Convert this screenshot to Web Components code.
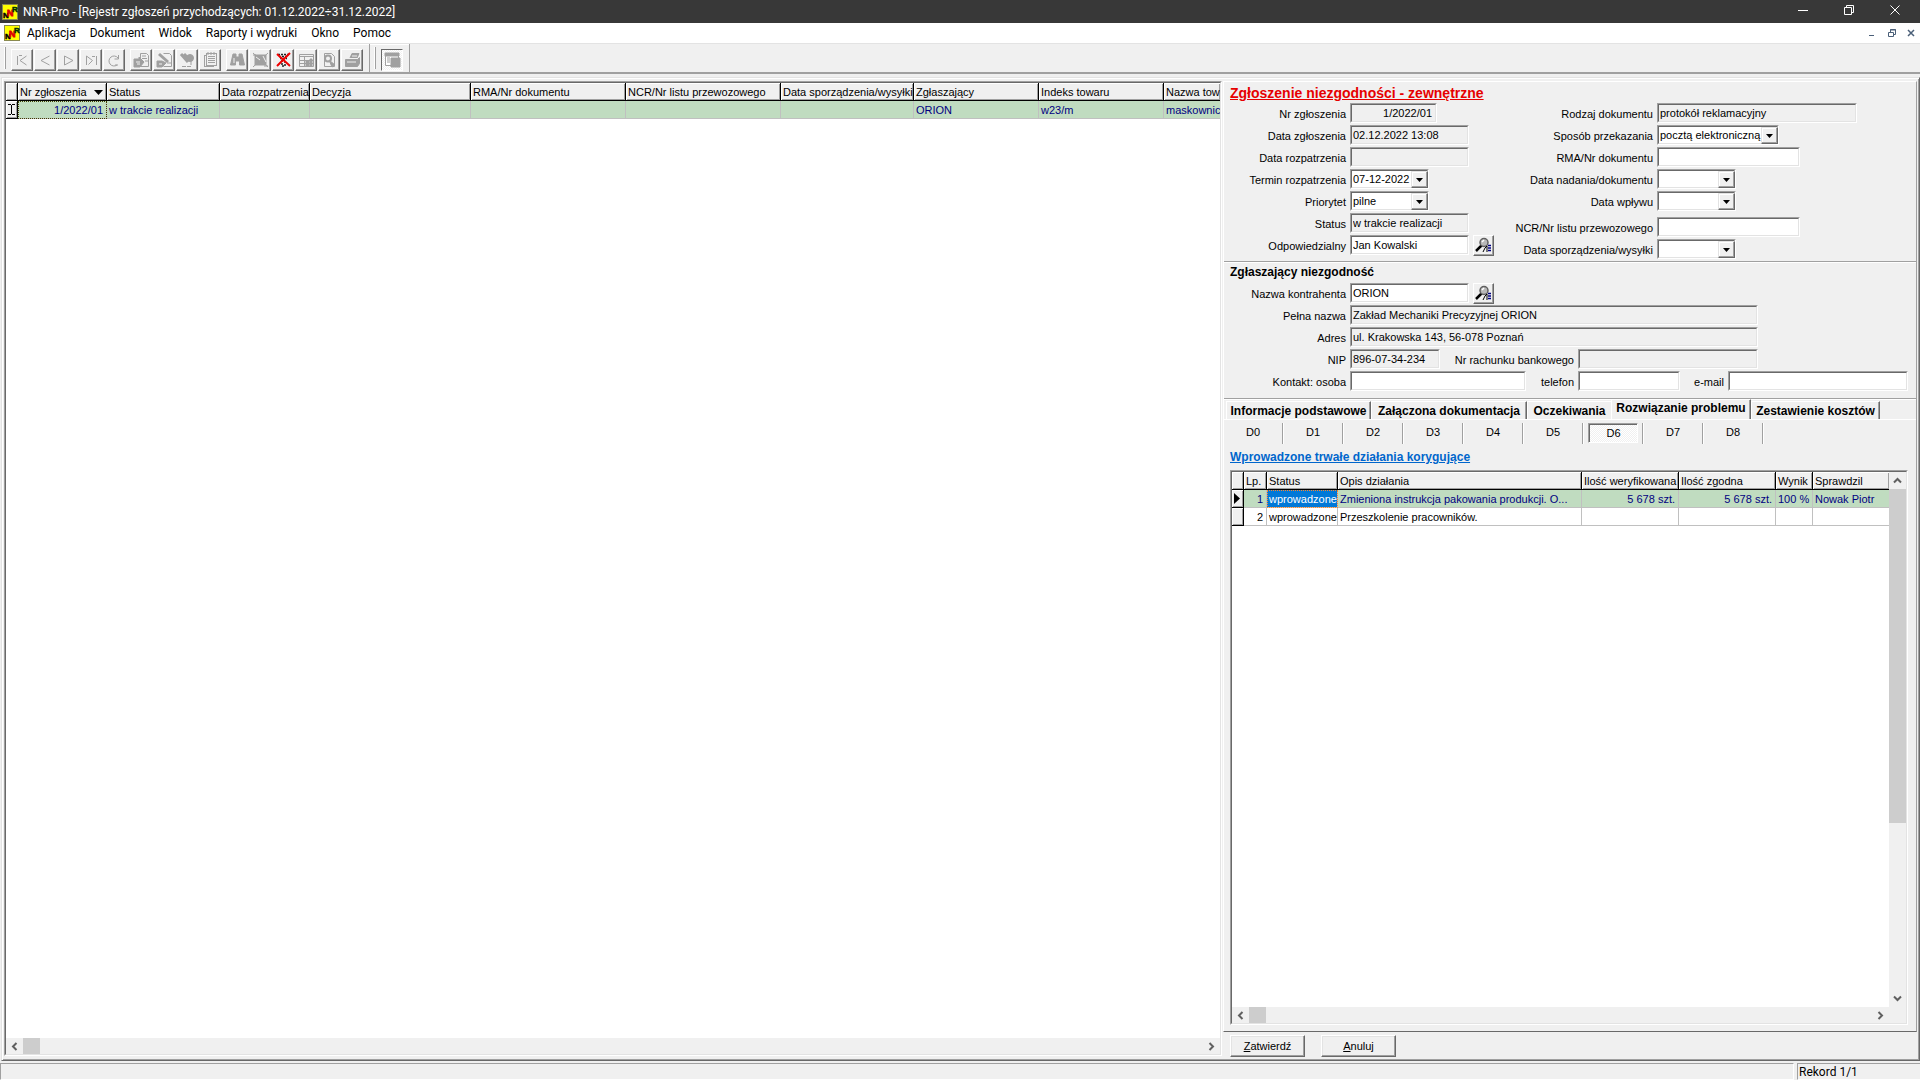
<!DOCTYPE html>
<html lang="pl">
<head>
<meta charset="utf-8">
<title>NNR-Pro</title>
<style>
html,body{margin:0;height:100%}
body{font:11px/13px "Liberation Sans",sans-serif;color:#000;background:#f0f0f0;overflow:hidden}
</style>
</head>
<body>
<nnr-app></nnr-app>
<script>
const BASE = `
*{box-sizing:border-box}
:host{display:block;box-sizing:border-box;min-width:0}
button,input,select{font:inherit;color:inherit;margin:0;border-radius:0;outline:0}
svg{display:block}
`;
function define(name, css, html, setup) {
  const tpl = document.createElement('template');
  customElements.define(name, class extends HTMLElement {
    connectedCallback() {
      if (this.shadowRoot) return;
      tpl.innerHTML = `<style>${BASE}${css}</style>${typeof html === 'function' ? html(this) : html}`;
      this.attachShadow({mode: 'open'}).append(tpl.content.cloneNode(true));
      if (setup) setup(this, this.shadowRoot);
    }
  });
}
const at = (el, n, d = '') => el.getAttribute(n) ?? d;

/* application logo */
define('app-logo', `:host{width:16px;height:16px;flex:none}`,
`<svg width="16" height="16" viewBox="0 0 16 16" aria-hidden="true"><rect width="16" height="16" fill="#8a8a50"/><rect x="1" y="1" width="14" height="14" fill="#ff0"/><g font-family="Liberation Sans" font-weight="bold"><text x="1" y="14" font-size="8" fill="#000" stroke="#000" stroke-width=".5">N</text><text x="5" y="12" font-size="9" fill="#e00000" stroke="#e00000" stroke-width=".8">N</text><text x="10" y="8" font-size="8" fill="#003000" stroke="#003000" stroke-width=".5">R</text></g></svg>`);

/* title bar */
define('title-bar', `
:host{display:flex;align-items:center;height:23px;background:#383838;color:#fff;font:12px/16px Roboto,sans-serif;padding:0 2px}
span{margin-left:5px;flex:1}
button{width:46px;height:23px;border:0;background:none;color:#fff;padding:0 0 3px;display:grid;place-items:center}`,
`<app-logo></app-logo><span><slot></slot></span>
<button aria-label="Minimalizuj"><svg width="10" height="10" stroke="#fff" fill="none"><path d="M0 5.5h10"/></svg></button>
<button aria-label="Przywróć"><svg width="10" height="10" stroke="#fff" fill="none"><path d="M.5 2.5h7v7h-7zM2.5 2V.5h7v7H8"/></svg></button>
<button aria-label="Zamknij"><svg width="10" height="10" stroke="#fff" fill="none"><path d="M.5.5l9 9M9.5.5l-9 9"/></svg></button>`);

/* menu bar */
define('menu-bar', `
:host{display:flex;align-items:center;height:20px;background:#fff;font:12px/16px Roboto,sans-serif;padding-left:4px}
nav{display:flex;flex:1}
button{border:0;background:none;padding:0 7px}
.win button{width:19px;height:19px;padding:0;display:grid;place-items:center}
.win{display:flex}`,
el => `<app-logo></app-logo><nav>${at(el,'items').split('|').map(t=>`<button>${t}</button>`).join('')}</nav>
<div class="win">
<button aria-label="Minimalizuj okno"><svg width="8" height="8" stroke="#4a5f78" fill="none"><path d="M0 6.5h5"/></svg></button>
<button aria-label="Przywróć okno"><svg width="8" height="8" stroke="#4a5f78" fill="none"><path d="M.5 3.5h5v4h-5zM2.5 3V.5h5v5H6M2 1h6"/></svg></button>
<button aria-label="Zamknij okno"><svg width="8" height="8" stroke="#4a5f78" stroke-width="1.5" fill="none"><path d="M1 1l6 6M7 1L1 7"/></svg></button></div>`);

/* toolbar */
const G = '#a0a0a0';
const ICONS = {
  first: `<path d="M3.500 4v9M5 3.500h3M12.500 4L6 8.500l6.500 4.500" fill="none"/>`,
  prev: `<path d="M12.500 4L4 8.500l8.500 4.500" fill="none"/>`,
  next: `<path d="M4.500 13V4l8.500 4.500L4.500 13" fill="none"/>`,
  last: `<path d="M3.500 13V4l6 4.500-4 4M9 4.500h3M13.500 4v9" fill="none"/>`,
  refresh: `<path d="M11 13a5 5 0 1 1 1-7M12.500 3v4h-4M9 13h3" fill="none"/>`,
  insert: `<path d="M7.500 6V1.500h6l2 2v11h-8M9 4h4M9 6.500h5M12 9h3" fill="none"/><path d="M1 7h5v-2l5 5-4 5H1z" fill="${G}"/><path d="M3 10h4M4 12h3" stroke="#f0f0f0"/>`,
  edit: `<path d="M7.500 1.500h6l2 2v11h-8M11 11h4" fill="none"/><path d="M1 9h5l4 2-4 4H1z" fill="${G}"/><path d="M3 2l9 8" stroke-width="3"/><path d="M3 12h3" stroke="#f0f0f0"/>`,
  del: `<path d="M2 2l7 8M5 2l6 6" stroke-width="3"/><circle cx="11" cy="6" r="3.500" fill="${G}"/><path d="M12 9v4M3 14.500h10" stroke-dasharray="4 1"/>`,
  copy: `<rect x="2.500" y="3.500" width="9" height="11" fill="none"/><rect x="4.500" y="1.500" width="10" height="12" fill="#f0f0f0"/><path d="M6 4.500h7M6 6.500h7M6 8.500h7M6 10.500h7M6 0v3M9 0v3M12 0v3"/>`,
  find: `<path d="M4 2h3v3h3V2h3l2.500 11h-5V9h-4v4h-5z" fill="${G}"/><path d="M5 6v5" stroke="#f0f0f0"/>`,
  filter: `<rect x="3" y="3" width="11" height="10" fill="${G}"/><path d="M1 1l15 14M16 1L1 15M1 3h3M12 14h4"/><path d="M4 5l4 3M11 4l3 6" stroke="#f0f0f0"/>`,
  clear: `<path d="M3 2.500h11M4 4.500h9M5 6.500h7M7 8v6h3V8" stroke="#202020" stroke-width="1.500" fill="none" stroke-dasharray="2 1"/><path d="M2 2l13 12M15 1L2 14" stroke="#f00000" stroke-width="2"/>`,
  table: `<path d="M1.500 2.500h14v12h-14zM2 4.500h13M2 8.500h13M2 11.500h13M6.500 5v9" fill="none"/><path d="M8 9h3v5H8zM12 7h2v7h-2z" fill="${G}"/>`,
  preview: `<path d="M3.500 1.500h7l3 3v10h-10z" fill="none"/><circle cx="7" cy="6.500" r="3" fill="none" stroke-width="2"/><path d="M8 8l6 5-3 2z" fill="${G}"/>`,
  print: `<path d="M6 6l2-4.500h7L13 6M1.500 7.500h12l2-2v6l-2 3h-12z" fill="${G}"/><path d="M3 10h9M8 4h5" stroke="#f0f0f0"/>`,
  layout: `<path d="M1.500 1.500h13v12h-13z" fill="#fff"/><path d="M1 1h14v3H1zM3 6h3M3 8h3M3 10h3M7 6h9v9H7z" fill="${G}"/>`
};
define('tool-button', `
button{width:22px;height:22px;padding:0 0 0 2px;background:#f0f0f0;border:1px solid;border-color:#fff #696969 #696969 #fff;box-shadow:inset -1px -1px #a0a0a0}
:host([pressed]) button{border-color:#696969 #fff #fff #696969;box-shadow:none;background:repeating-conic-gradient(#fff 0 25%,#f0f0f0 0 50%) 0 0/2px 2px}`,
el => `<button aria-label="${at(el,'label')}"><svg width="17" height="16" viewBox="0 0 17 16" stroke="${G}">${ICONS[at(el,'icon')]}</svg></button>`);
define('tool-bar', `
:host{display:flex;height:31px;border-top:1px solid #e3e3e3;border-bottom:2px solid #a0a0a0;background:#f0f0f0}
.band{display:flex;align-items:flex-start;padding:5px 6px 0 11px;border-right:1px solid #a0a0a0;box-shadow:inset 0 1px #fff;position:relative;gap:5px}
.band::before{content:"";position:absolute;left:4px;top:3px;width:2px;height:22px;background:linear-gradient(90deg,#fff 1px,#a0a0a0 1px)}
.grp{display:flex;gap:1px}`,
() => {
  const b = s => s.split(' ').map(i=>`<tool-button icon="${i}" label="${i}"></tool-button>`).join('');
  return `<div class="band"><div class="grp">${b('first prev next last refresh')}</div><div class="grp">${b('insert edit del copy')}</div><div class="grp">${b('find filter clear table preview print')}</div></div>
  <div class="band"><tool-button pressed icon="layout" label="Układ"></tool-button></div>`;
});

/* scroll bar */
define('scroll-bar', `
:host{display:flex;background:#f0f0f0;height:16px;flex:none}
:host([vertical]){flex-direction:column;width:17px;height:auto}
:host([corner]){padding-right:17px}
button{width:17px;height:16px;border:0;background:none;padding:0;display:grid;place-items:center;flex:none}
:host([vertical]) button{height:17px}
.track{flex:1;min-height:0}
.thumb{background:#cdcdcd;width:var(--len,17px);height:100%}
:host([vertical]) .thumb{width:100%;height:var(--len)}`,
el => {
  const v = el.hasAttribute('vertical');
  const ch = d => `<svg width="9" height="9" fill="none" stroke="#606060" stroke-width="2"><path d="${d}"/></svg>`;
  return `<button aria-label="Wstecz">${ch(v?'M1 6.500L4.500 3 8 6.500':'M6.500 1L3 4.500 6.500 8')}</button><div class="track"><div class="thumb"></div></div><button aria-label="Dalej">${ch(v?'M1 2.500L4.500 6 8 2.500':'M2.500 1L6 4.500 2.500 8')}</button>`;
});

/* data grid */
const GRIDS = {
  reg: {
    cols: [['',12],['Nr zgłoszenia',89],['Status',113],['Data rozpatrzenia',90],['Decyzja',161],['RMA/Nr dokumentu',155],['NCR/Nr listu przewozowego',155],['Data sporządzenia/wysyłki',133],['Zgłaszający',125],['Indeks towaru',125],['Nazwa tow',57]],
    sort: 1, right: [1], focus: 1,
    rows: [['I','1/2022/01','w trakcie realizacji','','','','','','ORION','w23/m','maskownic']]
  },
  act: {
    cols: [['',12],['Lp.',23],['Status',71],['Opis działania',244],['Ilość weryfikowana',97],['Ilość zgodna',97],['Wynik',37],['Sprawdzil',77]],
    right: [1,4,5,6], focus: 2, blue: true, corner: true,
    rows: [['&gt;','1','wprowadzone','Zmieniona instrukcja pakowania produkcji. O...','5 678 szt.','5 678 szt.','100 %','Nowak Piotr'],['','2','wprowadzone','Przeszkolenie pracowników.','','','','']]
  }
};
const MARKS = {
  'I': `<svg width="7" height="11" fill="none" stroke="#000"><path d="M0 .5h3M4 .5h3M0 10.500h3M4 10.500h3M3.500 1v9"/></svg>`,
  '&gt;': `<svg width="7" height="11"><path d="M0 0l6 5.500L0 11z"/></svg>`
};
define('data-grid', `
:host{display:flex;min-height:0;border:1px solid;border-color:#a0a0a0 #fff #fff #a0a0a0}
.in{flex:1;min-width:0;display:flex;flex-direction:column;border:1px solid;border-color:#696969 #e3e3e3 #e3e3e3 #696969;background:#fff}
.mid{display:flex;flex:1;min-height:0}
.view{flex:1;min-width:0;overflow:hidden}
table{border-collapse:separate;border-spacing:0;table-layout:fixed;width:0}
th,td{height:18px;padding:1px 0 0 2px;font-weight:normal;text-align:left;white-space:nowrap;overflow:hidden}
th,td.mark{background:#f0f0f0;border-right:1px solid #000;border-bottom:1px solid #000;box-shadow:inset 1px 1px #fff,inset -1px -1px #a0a0a0}
td.mark{padding:0 0 0 2px;vertical-align:middle}
td{border-right:1px solid #c0c0c0;border-bottom:1px solid #c0c0c0}
td.mark{border-bottom-color:#000}
tr.cur td:not(.mark){background:#c0dcc0;color:#000080}
td.r{text-align:right;padding-right:3px}
tr.cur td.focus{outline:1px dotted #404000;outline-offset:-1px}
tr.cur td.focus.blue{background:#0078d7;color:#fff;outline-color:#ff8728}
.sorted{display:flex;justify-content:space-between;align-items:center;padding-right:3px}`,
el => {
  const g = GRIDS[at(el,'data')];
  return `<div class="in"><div class="mid"><div class="view"><table>
<colgroup>${g.cols.map(c=>`<col style="width:${c[1]}px">`).join('')}</colgroup>
<thead><tr>${g.cols.map((c,i)=>`<th>${i===g.sort?`<div class="sorted">${c[0]}<svg width="9" height="5"><path d="M0 0h9L4.500 5z"/></svg></div>`:c[0]}</th>`).join('')}</tr></thead>
<tbody>${g.rows.map((r,n)=>`<tr class="${n?'':'cur'}">${r.map((c,i)=>i===0?`<td class="mark">${MARKS[c]||''}</td>`:`<td class="${g.right.includes(i)?'r':''} ${g.focus===i?'focus':''} ${g.focus===i&&g.blue?'blue':''}">${c}</td>`).join('')}</tr>`).join('')}</tbody>
</table></div><slot name="side"></slot></div><scroll-bar ${g.corner?'corner':''}></scroll-bar></div>`;
});

/* labelled form field: text box, drop-down, optional lookup button */
define('form-field', `
:host{display:flex;align-items:center;height:20px;gap:4px;--lw:122px}
:host([col2]){--lw:153px}
label{width:var(--lw);text-align:right;white-space:nowrap;flex:none;padding-top:2px}
.box{width:var(--w,119px);height:20px;flex:none;display:flex;border:1px solid;border-color:#a0a0a0 #fff #fff #a0a0a0}
input,select{flex:1;min-width:0;width:100%;height:18px;border:1px solid;border-color:#696969 #e3e3e3 #e3e3e3 #696969;background:#fff;padding:0 1px 1px 1px;appearance:none}
select{padding:0 16px 0 1px}
input[readonly]{background:#f0f0f0}
:host([end]) input{text-align:right;padding-right:3px}
.combo{position:relative}
.arrow{position:absolute;right:0;top:1px;width:17px;height:17px;pointer-events:none;background:#f0f0f0;border:1px solid;border-color:#e3e3e3 #696969 #696969 #e3e3e3;box-shadow:inset -1px -1px #a0a0a0,inset 1px 1px #fff;display:grid;place-items:center}
.look{width:21px;height:21px;padding:0;background:#f0f0f0;border:1px solid;border-color:#fff #696969 #696969 #fff;box-shadow:inset -1px -1px #a0a0a0;display:grid;place-items:center}`,
el => {
  const v = at(el,'value'), l = at(el,'label');
  const ctl = el.hasAttribute('combo')
    ? `<div class="box combo"><select id="c"><option>${v}</option></select><span class="arrow"><svg width="7" height="4"><path d="M0 0h7L3.500 4z"/></svg></span></div>`
    : `<div class="box"><input id="c" value="${v}" ${el.hasAttribute('ro')?'readonly':''}></div>`;
  return `<label for="c">${l}</label>${ctl}${el.hasAttribute('lookup')?`<button class="look" aria-label="Wybierz"><svg width="17" height="16" viewBox="0 0 17 16"><path d="M1 14l6-6" stroke="#000" stroke-width="2.500"/><circle cx="9" cy="5.500" r="4" fill="#b8b8b8" stroke="#606060" stroke-width="1.500"/><path d="M7 5l2-2" stroke="#fff" stroke-width="1.500"/><path d="M8 15l2-4 2-2v6" stroke="#000" fill="none"/><path d="M13 8.500h3M13 11h3M13 13.500h3" stroke="#000080" stroke-width="1.500"/></svg></button>`:''}`;
}, (el) => el.style.setProperty('--w', at(el,'w','119') + 'px'));

/* raised push button */
define('push-button', `
button{width:75px;height:22px;padding:0;background:#f0f0f0;border:1px solid;border-color:#fff #696969 #696969 #fff;box-shadow:inset -1px -1px #a0a0a0,inset 1px 1px #e3e3e3}`,
`<button><slot></slot></button>`);

/* page tabs */
define('page-tabs', `
:host{display:flex;align-items:flex-end;height:20px;padding-left:2px}
button{height:18px;width:var(--w);padding:2px 0 0;text-align:center;font-size:12px;font-weight:bold;background:#f0f0f0;border:0;border-left:1px solid #fff;border-top:1px solid #fff;border-right:1px solid #696969;box-shadow:inset -1px 0 #a0a0a0;white-space:nowrap}
button.on{height:20px;padding:0 0 2px}
button.pre{border-right:0;box-shadow:none}`,
`<button style="--w:145px">Informacje podstawowe</button><button style="--w:156px">Załączona dokumentacja</button><button class="pre" style="--w:84px">Oczekiwania</button><button class="on" style="--w:140px">Rozwiązanie problemu</button><button style="--w:129px">Zestawienie kosztów</button>`);

/* flat D0-D8 strip */
define('step-strip', `
:host{display:flex;height:21px}
div{width:60px;height:21px;border-right:1px solid #a0a0a0;box-shadow:1px 0 #fff;padding:0 4px 0 5px}
button{width:50px;height:20px;border:1px solid transparent;background:none;padding:0 0 1px}
button.on{border-color:#a0a0a0 #fff #fff #a0a0a0;box-shadow:inset 1px 1px #696969;padding:1px 0 0 1px;background:repeating-conic-gradient(#fff 0 25%,#f0f0f0 0 50%) 0 0/2px 2px}`,
() => [0,1,2,3,4,5,6,7,8].map(i=>`<div><button class="${i===6?'on':''}">D${i}</button></div>`).join(''));

/* status bar */
define('status-bar', `
:host{display:flex;gap:3px;height:19px;padding-top:2px;font:12px/16px Roboto,sans-serif}
div{border:1px solid;border-color:#a0a0a0 #fff #fff #a0a0a0;padding-left:1px;height:17px}
.a{flex:1}.b{width:123px;border-right:0}`,
`<div class="a"></div><div class="b"><slot></slot></div>`);

/* complaint editor */
define('claim-panel', `
:host{display:flex;flex-direction:column;min-height:0}
h1,h2,h3{margin:0;font-weight:bold}
.card{flex:1;min-height:0;display:flex;flex-direction:column;border:1px solid;border-color:#fff #a0a0a0 #696969 #fff}
h1{font-size:14px;line-height:16px;padding:3px 0 2px 6px;color:#e60000;text-decoration:underline}
.two{display:flex;height:158px}
.col{display:flex;flex-direction:column;gap:2px}
.c1{width:276px}
.gap{margin-top:4px}
section{border-bottom:1px solid #a0a0a0;box-shadow:0 1px #fff}
h2{font-size:12px;line-height:16px;padding:2px 0 3px 6px}
.who{height:137px}
.line{display:flex}
.body{flex:1;min-height:0;display:flex;flex-direction:column;border-top:1px solid #fff;padding:3px 8px 6px 6px}
step-strip{margin-left:-7px}
h3{font-size:12px;line-height:14px;padding:6px 0;color:#0066cc}
h3 a{color:inherit}
data-grid{flex:1}
.acts{display:flex;gap:16px;padding:3px 0 2px 7px}
`,
`<div class="card">
<section><h1>Zgłoszenie niezgodności - zewnętrzne</h1>
<div class="two"><div class="col c1">
<form-field label="Nr zgłoszenia" value="1/2022/01" w="87" ro end></form-field>
<form-field label="Data zgłoszenia" value="02.12.2022 13:08" ro></form-field>
<form-field label="Data rozpatrzenia" ro></form-field>
<form-field label="Termin rozpatrzenia" value="07-12-2022" w="79" combo></form-field>
<form-field label="Priorytet" value="pilne" w="79" combo></form-field>
<form-field label="Status" value="w trakcie realizacji" ro></form-field>
<form-field label="Odpowiedzialny" value="Jan Kowalski" lookup></form-field>
</div><div class="col">
<form-field col2 label="Rodzaj dokumentu" value="protokół reklamacyjny" w="200" ro></form-field>
<form-field col2 label="Sposób przekazania" value="pocztą elektroniczną" w="122" combo></form-field>
<form-field col2 label="RMA/Nr dokumentu" w="143"></form-field>
<form-field col2 label="Data nadania/dokumentu" w="79" combo></form-field>
<form-field col2 label="Data wpływu" w="79" combo></form-field>
<form-field class="gap" col2 label="NCR/Nr listu przewozowego" w="143"></form-field>
<form-field col2 label="Data sporządzenia/wysyłki" w="79" combo></form-field>
</div></div></section>
<section class="who"><h2>Zgłaszający niezgodność</h2><div class="col">
<form-field label="Nazwa kontrahenta" value="ORION" lookup></form-field>
<form-field label="Pełna nazwa" value="Zakład Mechaniki Precyzyjnej ORION" w="408" ro></form-field>
<form-field label="Adres" value="ul. Krakowska 143, 56-078 Poznań" w="408" ro></form-field>
<div class="line"><form-field label="NIP" value="896-07-34-234" w="90" ro></form-field><form-field style="--lw:134px" label="Nr rachunku bankowego" w="180" ro></form-field></div>
<div class="line"><form-field label="Kontakt: osoba" w="176"></form-field><form-field style="--lw:48px" label="telefon" w="102"></form-field><form-field style="--lw:44px" label="e-mail" w="180"></form-field></div>
</div></section>
<page-tabs></page-tabs>
<div class="body"><step-strip></step-strip>
<h3><a href="#">Wprowadzone trwałe działania korygujące</a></h3>
<data-grid data="act"><scroll-bar slot="side" vertical style="--len:334px"></scroll-bar></data-grid></div>
</div>
<div class="acts"><push-button><u>Z</u>atwierdź</push-button><push-button><u>A</u>nuluj</push-button></div>`);

define('nnr-app', `
:host{display:flex;flex-direction:column;height:100vh}
main{flex:1;min-height:0;display:flex;gap:1px;margin:3px 0 0 1px;border:1px solid;border-color:#e3e3e3 #696969 #696969 #e3e3e3;box-shadow:inset 1px 1px #fff,inset -1px -1px #a0a0a0;padding:3px 2px 1px 2px}
.left{flex:1;margin-bottom:3px}
claim-panel{width:694px;flex:none}`,
`<title-bar>NNR-Pro - [Rejestr zgłoszeń przychodzących: 01.12.2022÷31.12.2022]</title-bar>
<menu-bar items="Aplikacja|Dokument|Widok|Raporty i wydruki|Okno|Pomoc"></menu-bar>
<tool-bar></tool-bar>
<main><data-grid class="left" data="reg"></data-grid><claim-panel></claim-panel></main>
<status-bar>Rekord 1/1</status-bar>`);
</script>
</body>
</html>
